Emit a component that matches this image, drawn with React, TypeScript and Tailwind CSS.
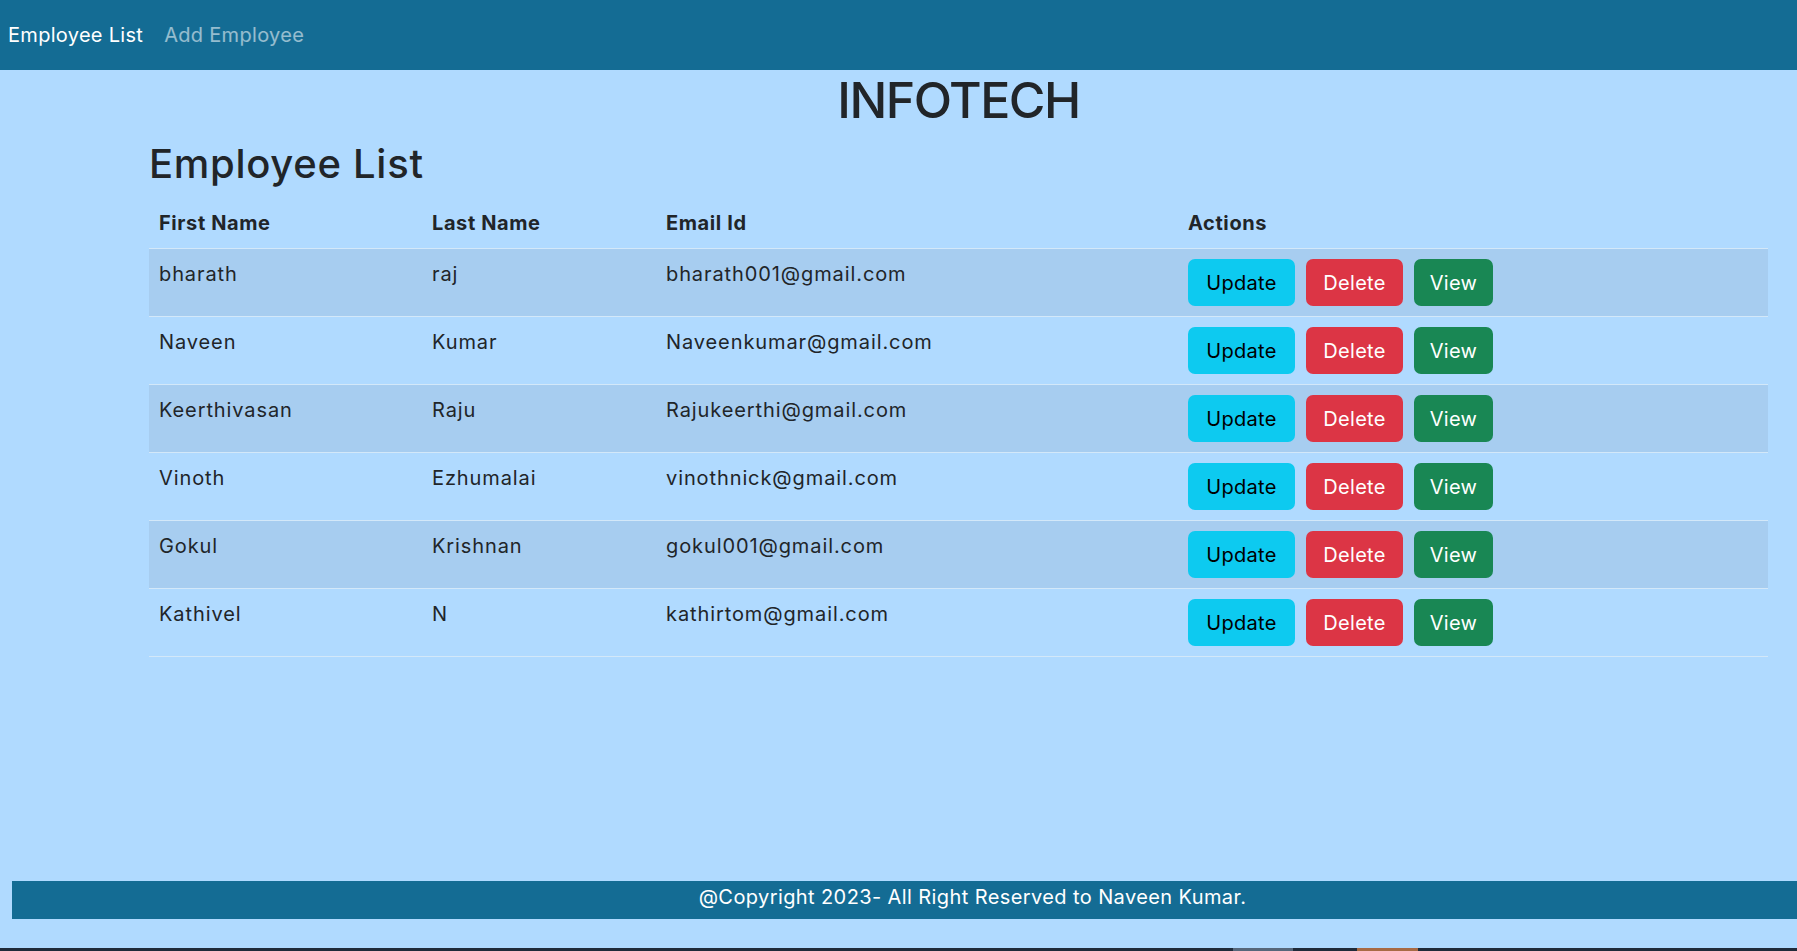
import React from "react";

const rows = [
  ["bharath", "raj", "bharath001@gmail.com"],
  ["Naveen", "Kumar", "Naveenkumar@gmail.com"],
  ["Keerthivasan", "Raju", "Rajukeerthi@gmail.com"],
  ["Vinoth", "Ezhumalai", "vinothnick@gmail.com"],
  ["Gokul", "Krishnan", "gokul001@gmail.com"],
  ["Kathivel", "N", "kathirtom@gmail.com"],
];

export default function App() {
  return (
    <div className="h-[951px] flex flex-col bg-[#B0DAFF] font-['Inter','Noto_Sans',sans-serif] text-[#212529] overflow-hidden">
      <nav className="h-[70px] shrink-0 bg-[#146C94] flex items-center pl-[8px] gap-[21px] text-[20px] leading-[30px] tracking-[0.3px]">
        <span className="text-white">Employee List</span>
        <span className="text-white/55">Add Employee</span>
      </nav>
      <main className="pl-[149px] pr-[29px]">
        <h1 className="text-[50px] leading-[60px] text-center font-medium mb-[10px] tracking-[-1.5px]">INFOTECH</h1>
        <h2 className="text-[40px] leading-[48px] font-medium mb-[10px] tracking-[0.7px]">Employee List</h2>
        <table className="w-full table-fixed border-collapse text-[20px] leading-[30px]">
          <colgroup>
            <col className="w-[273px]" />
            <col className="w-[234px]" />
            <col className="w-[522px]" />
            <col />
          </colgroup>
          <thead>
            <tr className="border-b border-[#d3e8f9]">
              <th className="text-left font-bold p-[10px] tracking-[0.6px]">First Name</th>
              <th className="text-left font-bold p-[10px] tracking-[0.6px]">Last Name</th>
              <th className="text-left font-bold p-[10px] tracking-[0.6px]">Email Id</th>
              <th className="text-left font-bold p-[10px] tracking-[0.6px]">Actions</th>
            </tr>
          </thead>
          <tbody>
            {rows.map((r, i) => (
              <tr
                key={i}
                className={
                  "border-b border-[#d3e8f9] " + (i % 2 === 0 ? "bg-[#A7CDF0]" : "")
                }
              >
                <td className="align-top p-[10px] tracking-[0.9px]">{r[0]}</td>
                <td className="align-top p-[10px] tracking-[0.9px]">{r[1]}</td>
                <td className="align-top p-[10px] tracking-[0.9px]">{r[2]}</td>
                <td className="align-top p-[10px]">
                  <div className="flex gap-[11px]">
                    <button className="w-[107px] h-[47px] rounded-[7px] bg-[#0DCAF0] text-black text-[20px] tracking-[0.3px]">Update</button>
                    <button className="w-[97px] h-[47px] rounded-[7px] bg-[#DC3545] text-white text-[20px] tracking-[0.3px]">Delete</button>
                    <button className="w-[79px] h-[47px] rounded-[7px] bg-[#198754] text-white text-[20px] tracking-[0.3px]">View</button>
                  </div>
                </td>
              </tr>
            ))}
          </tbody>
        </table>
      </main>
      <div className="flex-1" />
      <footer className="ml-[12px] h-[38px] shrink-0 bg-[#146C94] flex items-center justify-center pl-[136px] pb-[6px] text-white text-[20px] tracking-[0.4px]">
        @Copyright 2023- All Right Reserved to Naveen Kumar.
      </footer>
      <div className="h-[29px] shrink-0" />
      <div className="h-[3px] shrink-0 bg-[#1f2b3a] flex">
        <div className="ml-[1233px] w-[60px] bg-[#56677b]" />
        <div className="ml-[64px] w-[61px] bg-[#a86b45]" />
      </div>
    </div>
  );
}
